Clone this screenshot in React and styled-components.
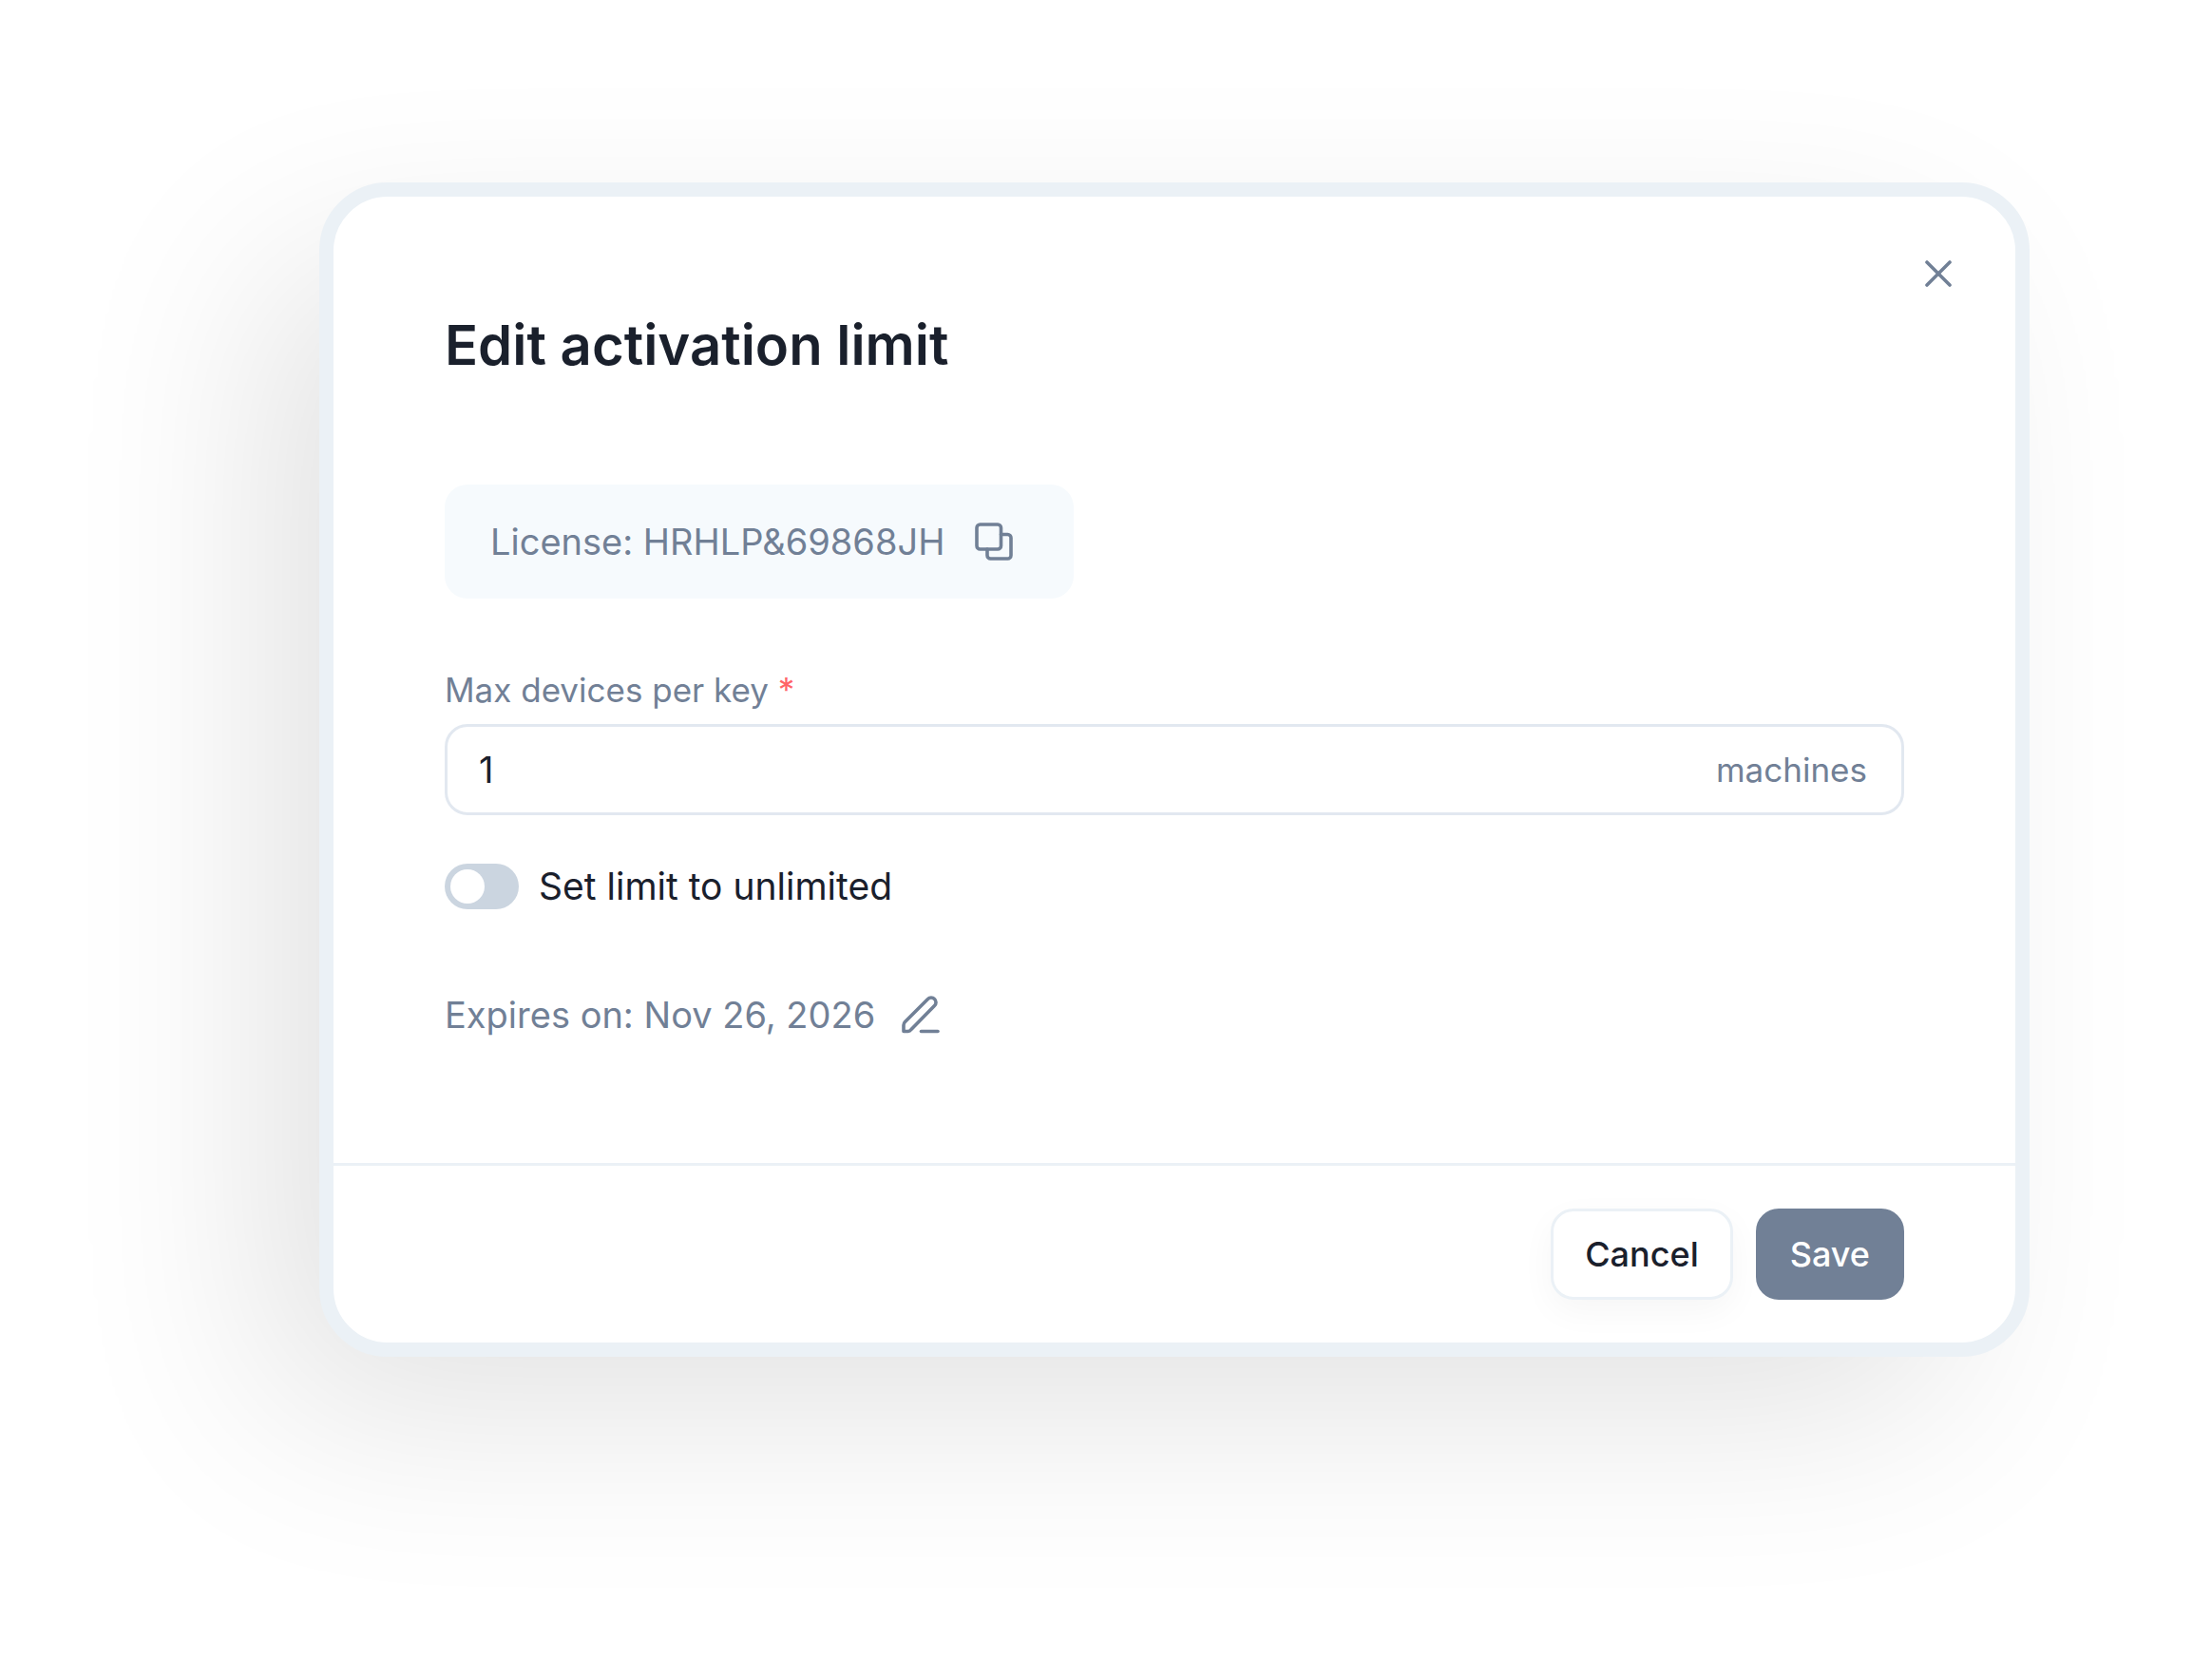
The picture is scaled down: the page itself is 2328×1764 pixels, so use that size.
import React from 'react';
import styled, { createGlobalStyle } from 'styled-components';

const Global = createGlobalStyle`
  *, *::before, *::after { box-sizing: border-box; }
  body { margin: 0; background: #ffffff; }
  button, input { font: inherit; color: inherit; }
`;

const Page = styled.main`
  min-height: 100vh;
  padding: 192px 192px 192px 336px;
  font-family: Inter, "Liberation Sans", sans-serif;
  font-size: 38px;
  line-height: 48px;
  color: #1a202c;
  overflow: hidden;
`;

const Dialog = styled.section`
  background: #ffffff;
  border: 15px solid #ebf1f6;
  border-radius: 72px;
  box-shadow: -72px 72px 216px -20px rgba(0, 0, 0, 0.12);
`;

const Content = styled.div`
  display: flex;
  flex-direction: column;
  align-items: flex-start;
  padding: 57px 117px 132px;
`;

const CloseButton = styled.button`
  display: flex;
  align-self: flex-end;
  margin-right: -60px;
  padding: 0;
  border: 0;
  background: none;
  color: #718096;
  cursor: pointer;
`;

const Title = styled.h2`
  margin: 12px 0 108px;
  font-size: 58px;
  line-height: 78px;
  font-weight: 600;
`;

const License = styled.div`
  display: flex;
  align-items: center;
  gap: 28px;
  height: 120px;
  padding: 0 60px 0 48px;
  border-radius: 24px;
  background: #f6fafd;
  color: #718096;
`;

const IconButton = styled.button`
  display: flex;
  padding: 0;
  border: 0;
  background: none;
  color: #718096;
  cursor: pointer;
`;

const FieldLabel = styled.label`
  margin: 72px 0 12px;
  font-size: 35px;
  color: #718096;
`;

const Required = styled.span`
  color: #ff6467;
`;

const InputBox = styled.div`
  display: flex;
  align-items: center;
  align-self: stretch;
  height: 96px;
  padding: 0 36px 0 33px;
  border: 3px solid #e2e8f0;
  border-radius: 24px;
`;

const Input = styled.input`
  flex: 1;
  min-width: 0;
  padding: 0;
  border: 0;
  outline: 0;
  background: none;
`;

const Suffix = styled.span`
  font-size: 35px;
  color: #718096;
`;

const SwitchRow = styled.label`
  display: flex;
  align-items: center;
  gap: 21px;
  margin: 51px 0 87px;
  font-size: 39px;
`;

const Switch = styled.input`
  appearance: none;
  width: 78px;
  height: 48px;
  margin: 0;
  padding: 6px;
  border-radius: 24px;
  background: #cbd5e0;
  cursor: pointer;

  &::before {
    content: "";
    display: block;
    width: 36px;
    height: 36px;
    border-radius: 50%;
    background: #ffffff;
  }

  &:checked { background: #718096; }
  &:checked::before { margin-left: 30px; }
`;

const Expiry = styled.div`
  display: flex;
  align-items: center;
  gap: 24px;
  color: #718096;
`;

const Footer = styled.footer`
  display: flex;
  justify-content: flex-end;
  gap: 24px;
  padding: 45px 117px;
  border-top: 3px solid #ebf1f6;
`;

const Button = styled.button`
  height: 96px;
  padding: 0 33px;
  border: 3px solid ${(p) => (p.$primary ? '#718096' : '#ebf1f6')};
  border-radius: 24px;
  background: ${(p) => (p.$primary ? '#718096' : '#ffffff')};
  box-shadow: ${(p) => (p.$primary ? 'none' : '0 12px 36px rgba(0, 0, 0, 0.04)')};
  color: ${(p) => (p.$primary ? '#ffffff' : '#1a202c')};
  font-size: 36px;
  font-weight: 500;
  cursor: pointer;
`;

const Icon = ({ children }) => (
  <svg width="48" height="48" viewBox="0 0 48 48" fill="none" stroke="currentColor"
    strokeWidth="3.6" strokeLinecap="round" strokeLinejoin="round" aria-hidden="true">
    {children}
  </svg>
);

export default function App() {
  return (
    <>
      <Global />
      <Page>
        <Dialog role="dialog" aria-labelledby="dialog-title">
          <Content>
            <CloseButton type="button" aria-label="Close">
              <Icon><path d="M12 12 36 36M36 12 12 36" /></Icon>
            </CloseButton>
            <Title id="dialog-title">Edit activation limit</Title>
            <License>
              <span>License: HRHLP&amp;69868JH</span>
              <IconButton type="button" aria-label="Copy license">
                <Icon>
                  <rect x="6" y="6" width="25.500" height="26" rx="3.500" />
                  <path d="M31.500 16.500h7a3.500 3.500 0 0 1 3.500 3.500v18.500a3.500 3.500 0 0 1-3.500 3.500H20.500a3.500 3.500 0 0 1-3.500-3.500v-6.500" />
                </Icon>
              </IconButton>
            </License>
            <FieldLabel htmlFor="max-devices">
              Max devices per key <Required>*</Required>
            </FieldLabel>
            <InputBox>
              <Input id="max-devices" type="text" inputMode="numeric" defaultValue="1" />
              <Suffix>machines</Suffix>
            </InputBox>
            <SwitchRow>
              <Switch type="checkbox" role="switch" />
              Set limit to unlimited
            </SwitchRow>
            <Expiry>
              <span>Expires on: Nov 26, 2026</span>
              <IconButton type="button" aria-label="Edit expiry date">
                <Icon>
                  <path d="M24.500 41.500H42" />
                  <path d="M6 41.500v-6.500a5 5 0 0 1 1.500-3.500L31.500 7.500a4.800 4.800 0 0 1 7 0a4.800 4.800 0 0 1 0 7L14 39.500a5 5 0 0 1-3.500 2z" />
                </Icon>
              </IconButton>
            </Expiry>
          </Content>
          <Footer>
            <Button type="button">Cancel</Button>
            <Button type="button" $primary>Save</Button>
          </Footer>
        </Dialog>
      </Page>
    </>
  );
}
